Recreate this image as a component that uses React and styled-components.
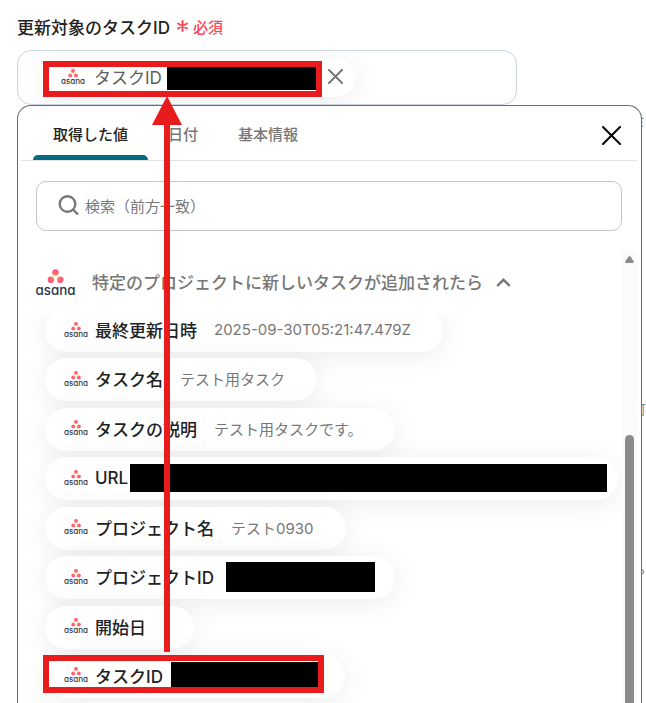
import React, { useId } from "react";
import styled, { createGlobalStyle } from "styled-components";

const GlobalStyle = createGlobalStyle`
  *, *::before, *::after { box-sizing: border-box; }
  html, body { margin: 0; background: #fff; }
  body, button, input {
    font-family: Inter, "Noto Sans CJK JP", sans-serif;
    color: #222;
  }
  button { border: 0; background: none; padding: 0; cursor: pointer; }
  h2, h3, p, ul { margin: 0; padding: 0; list-style: none; }
`;

const Page = styled.main`
  position: relative;
  display: flex;
  flex-direction: column;
  height: 100vh;
  min-height: 700px;
  padding: 13px 0 0 17px;
  overflow: hidden;
`;

const FieldTitle = styled.h2`
  display: flex;
  align-items: center;
  gap: 7px;
  height: 26px;
  margin-bottom: 11px;
  font-size: 17px;
  font-weight: 500;
`;

const Required = styled.span`
  display: flex;
  align-items: center;
  gap: 5px;
  color: #ff4458;
  font-size: 15px;
`;

const TokenField = styled.div`
  display: flex;
  align-items: center;
  flex-shrink: 0;
  width: calc(100% - 129px);
  height: 55px;
  padding: 0 24px;
  border: 1px solid #cbd3dc;
  border-radius: 14px;
  overflow: hidden;
`;

const Chip = styled.div`
  display: flex;
  align-items: center;
  width: fit-content;
  height: ${(p) => (p.$compact ? 38 : 43)}px;
  padding: 0 ${(p) => p.$end || 32}px 2px 19px;
  border-radius: 22px;
  background: #fff;
  box-shadow: 0 4px 28px rgba(0, 0, 0, 0.08);
  white-space: nowrap;
`;

const ChipLabel = styled.span`
  margin-left: ${(p) => (p.$muted ? 9 : 7)}px;
  font-size: 17px;
  font-weight: ${(p) => (p.$muted ? 400 : 500)};
  color: ${(p) => (p.$muted ? "#5c5f61" : "#222")};
`;

const ChipValue = styled.span`
  margin-left: 17px;
  font-size: 15px;
  color: #777;
`;

const Redaction = styled.span`
  width: ${(p) => p.$width}px;
  height: ${(p) => p.$height}px;
  margin-left: ${(p) => p.$gap}px;
  background: #000;
`;

const IconButton = styled.button`
  display: flex;
  align-items: center;
  justify-content: center;
`;

const RemoveButton = styled(IconButton)`
  margin-left: 12px;
`;

const Lower = styled.div`
  display: flex;
  flex: 1;
  min-height: 0;
`;

const Panel = styled.section`
  display: flex;
  flex-direction: column;
  flex: 1;
  min-width: 0;
  padding: 0 4px 0 3px;
  border: 1px solid #6c6c6c;
  border-bottom: 0;
  border-radius: 14px 14px 0 0;
`;

const PanelHeader = styled.header`
  display: flex;
  flex-shrink: 0;
  height: 55px;
  padding-left: 12px;
  padding-right: 16px;
  border-bottom: 1px solid #e0e3e3;
`;

const CloseButton = styled(IconButton)`
  padding-top: 4px;
`;

const TabList = styled.div`
  display: flex;
  flex: 1;
`;

const Tab = styled.button`
  position: relative;
  height: 54px;
  padding: 0 20px;
  font-size: 15px;
  font-weight: 500;
  color: ${(p) => (p.$active ? "#222" : "#777")};

  &::after {
    content: "";
    position: absolute;
    inset: auto 0 0;
    height: 5px;
    border-radius: 5px 5px 0 0;
    background: ${(p) => (p.$active ? "#066b82" : "transparent")};
  }
`;

const SearchBox = styled.label`
  display: flex;
  align-items: center;
  flex-shrink: 0;
  gap: 5px;
  height: 50px;
  margin: 20px 15px 20px;
  padding: 0 21px;
  border: 1px solid #c4c6c7;
  border-radius: 10px;
`;

const SearchInput = styled.input`
  flex: 1;
  min-width: 0;
  padding: 0;
  border: 0;
  outline: 0;
  background: transparent;
  font-size: 15px;
  &::placeholder { color: #777; opacity: 1; }
`;

const Results = styled.div`
  display: flex;
  flex: 1;
  min-height: 0;
`;

const Group = styled.div`
  display: flex;
  flex-direction: column;
  flex: 1;
  min-width: 0;
`;

const GroupHeader = styled.button`
  display: flex;
  align-items: center;
  flex-shrink: 0;
  height: 63px;
  padding-left: 15px;
`;

const GroupTitle = styled.span`
  margin: 0 13px 0 17px;
  padding-bottom: 3px;
  font-size: 17px;
  font-weight: 500;
  color: #777;
  white-space: nowrap;
`;

const ListWindow = styled.div`
  display: flex;
  flex: 1;
  min-height: 0;
  overflow: hidden;
`;

const ValueList = styled.ul`
  display: flex;
  flex-direction: column;
  flex: 1;
  justify-content: space-between;
  margin: -5px 0 5px;
  padding-left: 24px;
`;

const Scrollbar = styled.div`
  display: flex;
  flex-direction: column;
  align-items: center;
  width: 15px;
  padding-top: 5px;
  background: #fbfbfb;
`;

const Thumb = styled.div`
  flex: 1;
  width: 9px;
  margin-top: 172px;
  border-radius: 5px 5px 0 0;
  background: #8b8b8b;
`;

const Behind = styled.aside`
  position: relative;
  width: 4px;
  overflow: hidden;
  color: #7d8790;
`;

const BehindText = styled.span`
  position: absolute;
  top: ${(p) => p.$top}px;
  right: 0;
  font-size: 13px;
  line-height: 22px;
`;

const Frame = styled.div`
  position: absolute;
  left: 43px;
  width: ${(p) => p.$width}px;
  height: ${(p) => p.$height}px;
  top: ${(p) => p.$top || "auto"};
  bottom: ${(p) => p.$bottom || "auto"};
  border: 6px solid #e81c1c;
  pointer-events: none;
`;

const Arrow = styled.div`
  position: absolute;
  top: 96px;
  bottom: 51px;
  left: 152px;
  display: flex;
  flex-direction: column;
  align-items: center;
  width: 30px;
  pointer-events: none;
`;

const ArrowHead = styled.div`
  width: 30px;
  height: 29px;
  background: #e81c1c;
  clip-path: polygon(50% 0, 100% 100%, 0 100%);
`;

const ArrowShaft = styled.div`
  flex: 1;
  width: 6px;
  background: #e81c1c;
`;

const LogoSvg = styled.svg`
  flex-shrink: 0;
  display: block;
  overflow: visible;
`;

const LogoText = styled.text`
  font-family: Inter, sans-serif;
  font-feature-settings: "cv11";
  font-weight: 500;
  font-size: 13px;
  fill: #2f3547;
`;

function AsanaLogo({ width = 24 }) {
  const id = useId();
  return (
    <LogoSvg width={width} height={Math.round((width * 26) / 38)} viewBox="0 0 38 26" role="img" aria-label="asana">
      <defs>
        <radialGradient id={id} gradientUnits="userSpaceOnUse" cx="19" cy="8" r="8">
          <stop offset="0" stopColor="#ffb03f" />
          <stop offset="0.4" stopColor="#ff7e5b" />
          <stop offset="0.8" stopColor="#ff5480" />
        </radialGradient>
      </defs>
      <g fill={`url(#${id})`}>
        <circle cx="19" cy="3.2" r="3.2" />
        <circle cx="14.6" cy="10.4" r="3.2" />
        <circle cx="23.6" cy="10.4" r="3.2" />
      </g>
      <LogoText x="19" y="25" textAnchor="middle">asana</LogoText>
    </LogoSvg>
  );
}

function Cross({ size, color, stroke }) {
  const end = size - 1;
  return (
    <svg width={size} height={size} viewBox={`0 0 ${size} ${size}`} fill="none" stroke={color} strokeWidth={stroke} strokeLinecap="round">
      <path d={`M1 1 L${end} ${end} M${end} 1 L1 ${end}`} />
    </svg>
  );
}

const values = [
  { label: "最終更新日時", value: "2025-09-30T05:21:47.479Z" },
  { label: "タスク名", value: "テスト用タスク" },
  { label: "タスクの説明", value: "テスト用タスクです。" },
  { label: "URL", hidden: { $width: 477, $height: 28, $gap: 2 }, end: 11 },
  { label: "プロジェクト名", value: "テスト0930" },
  { label: "プロジェクトID", hidden: { $width: 149, $height: 30, $gap: 12 }, end: 20 },
  { label: "開始日", end: 48 },
  { label: "タスクID", hidden: { $width: 147, $height: 26, $gap: 8 }, end: 27 },
];

export default function App() {
  return (
    <>
      <GlobalStyle />
      <Page>
        <FieldTitle>
          更新対象のタスクID
          <Required>
            <svg width="11" height="12" viewBox="0 0 11 12" stroke="#ff4458" strokeWidth="2" strokeLinecap="round" aria-hidden="true">
              <path d="M5.5 1V11M1 3.5L10 8.5M10 3.5L1 8.5" />
            </svg>
            必須
          </Required>
        </FieldTitle>
        <TokenField>
          <Chip $compact $end={13}>
            <AsanaLogo />
            <ChipLabel $muted>タスクID</ChipLabel>
            <Redaction $width={149} $height={26} $gap={5} />
            <RemoveButton type="button" aria-label="削除">
              <Cross size={15} color="#777" stroke={2} />
            </RemoveButton>
          </Chip>
        </TokenField>
        <Lower>
          <Panel>
            <PanelHeader>
              <TabList role="tablist">
                <Tab type="button" role="tab" aria-selected="true" $active>取得した値</Tab>
                <Tab type="button" role="tab" aria-selected="false">日付</Tab>
                <Tab type="button" role="tab" aria-selected="false">基本情報</Tab>
              </TabList>
              <CloseButton type="button" aria-label="閉じる">
                <Cross size={19} color="#000" stroke={2} />
              </CloseButton>
            </PanelHeader>
            <SearchBox>
              <svg width="22" height="22" viewBox="0 0 22 22" fill="none" stroke="#777" strokeWidth="2.4" aria-hidden="true">
                <circle cx="9.5" cy="9" r="7.8" />
                <path d="M15 14.5l5 5" />
              </svg>
              <SearchInput type="text" placeholder="検索（前方一致）" aria-label="検索（前方一致）" />
            </SearchBox>
            <Results>
              <Group>
                <GroupHeader type="button" aria-expanded="true">
                  <AsanaLogo width={39} />
                  <GroupTitle>特定のプロジェクトに新しいタスクが追加されたら</GroupTitle>
                  <svg width="15" height="9" viewBox="0 0 15 9" fill="none" stroke="#777" strokeWidth="2.4" aria-hidden="true">
                    <path d="M1.2 8L7.5 1.8L13.8 8" />
                  </svg>
                </GroupHeader>
                <ListWindow>
                  <ValueList>
                    {values.map((v) => (
                      <Chip as="li" key={v.label} $end={v.end}>
                        <AsanaLogo />
                        <ChipLabel>{v.label}</ChipLabel>
                        {v.value && <ChipValue>{v.value}</ChipValue>}
                        {v.hidden && <Redaction {...v.hidden} />}
                      </Chip>
                    ))}
                  </ValueList>
                </ListWindow>
              </Group>
              <Scrollbar aria-hidden="true">
                <svg width="9" height="7" viewBox="0 0 9 7" fill="#8b8b8b">
                  <path d="M4.5 0Q5 0 5.4 .6L8.8 5.5Q9 7 8 7H1Q0 7 .2 5.5L3.6 .6Q4 0 4.5 0Z" />
                </svg>
                <Thumb />
              </Scrollbar>
            </Results>
          </Panel>
          <Behind aria-hidden="true">
            <BehindText $top={5}>ミ</BehindText>
            <BehindText $top={293}>可</BehindText>
            <BehindText $top={453}>ら</BehindText>
          </Behind>
        </Lower>
        <Frame $top="61px" $width={279} $height={36} />
        <Frame $bottom="10px" $width={281} $height={38} />
        <Arrow>
          <ArrowHead />
          <ArrowShaft />
        </Arrow>
      </Page>
    </>
  );
}
